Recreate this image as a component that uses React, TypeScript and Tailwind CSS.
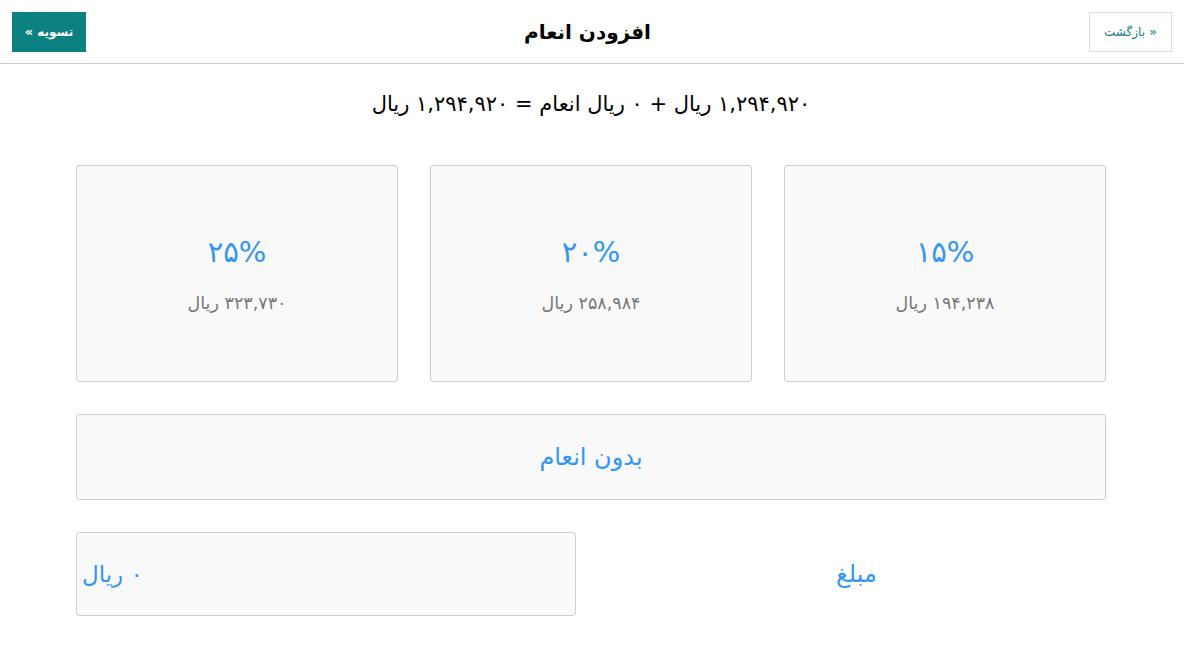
const tips = [
  { pct: "۱۵%", amount: "۱۹۴,۲۳۸ ریال" },
  { pct: "۲۰%", amount: "۲۵۸,۹۸۴ ریال" },
  { pct: "۲۵%", amount: "۳۲۳,۷۳۰ ریال" },
];

export default function App() {
  return (
    <div
      dir="rtl"
      className="min-h-screen bg-white text-black"
      style={{ fontFamily: '"DejaVu Sans", "Noto Sans", sans-serif' }}
    >
      {/* header */}
      <div className="flex h-16 items-center justify-between border-b border-[#c9c9d1] px-3">
        <button className="flex h-10 w-[83px] items-center justify-center gap-1 border border-[#dddddd] bg-white text-[12px] text-[#127d7d]">
          <span className="text-[13px]">«</span>
          <span>بازگشت</span>
        </button>
        <h1 className="text-[20px] font-bold">افزودن انعام</h1>
        <button className="flex h-10 w-[74px] items-center justify-center gap-1 bg-[#0a8080] text-[12px] font-bold text-white">
          <span>تسویه</span>
          <span className="text-[13px]">»</span>
        </button>
      </div>

      <div dir="ltr" className="pl-[76px]">
        <div dir="rtl" className="w-[1030px]">
          <p className="pt-[25px] text-center text-[21px] leading-[30px]">
            ۱,۲۹۴,۹۲۰ ریال + ۰ ریال انعام = ۱,۲۹۴,۹۲۰ ریال
          </p>

          <div className="mt-[46px] grid grid-cols-3 gap-8">
            {tips.map((t) => (
              <div
                key={t.pct}
                className="flex h-[217px] flex-col items-center justify-center rounded-[3px] border border-[#cfcfcf] bg-[#f9f9f9] pt-[2px]"
              >
                <div className="text-[29px] leading-[40px] text-[#3396f5]">{t.pct}</div>
                <div className="mt-[18px] text-[17.5px] text-[#777777]">{t.amount}</div>
              </div>
            ))}
          </div>

          <button className="mt-8 flex h-[86px] w-full items-center justify-center rounded-[3px] border border-[#cfcfcf] bg-[#f9f9f9] text-[24px] text-[#3396f5]">
            بدون انعام
          </button>

          <div className="mt-8 grid grid-cols-2 gap-8">
            <div className="flex h-[84px] items-center justify-center text-[24px] text-[#3396f5]">
              مبلغ
            </div>
            <div className="flex h-[84px] w-[500px] items-center justify-self-end rounded-[3px] border border-[#cfcfcf] bg-[#f9f9f9]">
              <div className="w-full pl-[5px] text-left text-[23px] text-[#3396f5]" dir="ltr">
                <span dir="rtl">۰ ریال</span>
              </div>
            </div>
          </div>
        </div>
      </div>
    </div>
  );
}
